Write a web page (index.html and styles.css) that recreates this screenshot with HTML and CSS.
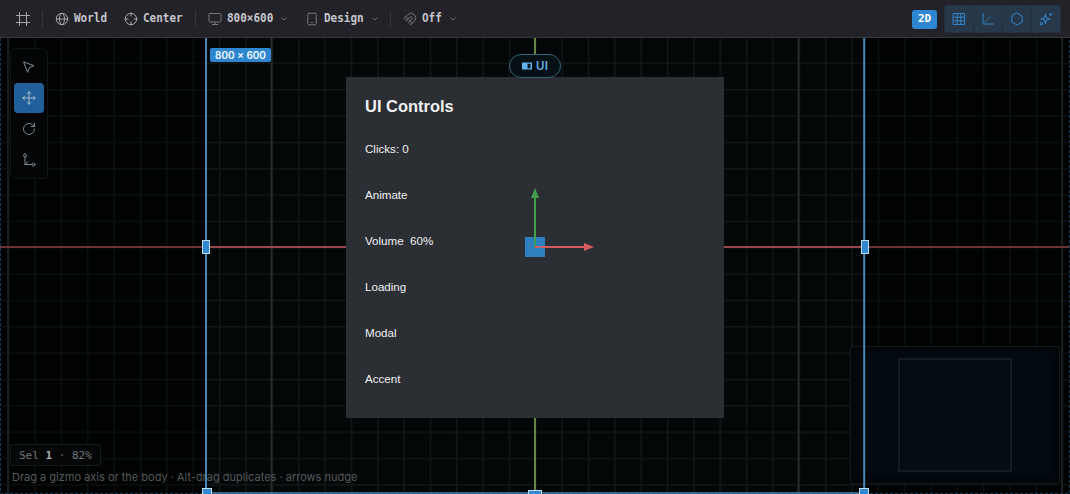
FILE: index.html
```html
<!DOCTYPE html>
<html lang="en">
<head>
<meta charset="utf-8">
<title>Scene editor</title>
<link rel="stylesheet" href="styles.css">
</head>
<body>
<div class="editor">
  <header class="toolbar">
    <svg class="icon frame-icon" viewBox="0 0 16 16"><path d="M4.5 1.5v13M11.5 1.5v13M1.5 4.5h13M1.5 11.5h13"/></svg>
    <i class="divider first"></i>
    <div class="item world"><svg class="icon" viewBox="0 0 14 14"><circle cx="7" cy="7" r="5.7"/><ellipse cx="7" cy="7" rx="2.5" ry="5.7"/><path d="M1.3 7h11.4"/></svg><span>World</span></div>
    <div class="item center"><svg class="icon" viewBox="0 0 14 14"><circle cx="7" cy="7" r="5.7"/><path d="M7 1v3M7 10v3M1 7h3M10 7h3"/></svg><span>Center</span></div>
    <i class="divider second"></i>
    <div class="item size"><svg class="icon dim" viewBox="0 0 14 14"><rect x="1" y="1.5" width="12" height="8.5" rx="1.2"/><path d="M7 10v2.5M4.3 12.5h5.4"/></svg><span>800×600</span><svg class="chevron" viewBox="0 0 8 8"><path d="M1.5 2.5 4 5l2.500-2.500"/></svg></div>
    <div class="item design"><svg class="icon dim" viewBox="0 0 14 14"><rect x="2.800" y="1.200" width="8.400" height="11.600" rx="1.200"/><path d="M6.500 10.500h1"/></svg><span>Design</span><svg class="chevron" viewBox="0 0 8 8"><path d="M1.500 2.500 4 5l2.500-2.500"/></svg></div>
    <i class="divider third"></i>
    <div class="item snap"><svg class="icon dim" viewBox="0 0 24 24"><path d="m6 15-4-4 6.750-6.770a7.790 7.790 0 0 1 11 11L13 22l-4-4 6.390-6.360a2.140 2.140 0 0 0-3-3L6 15M5 8l4 4M12 15l4 4"/></svg><span>Off</span><svg class="chevron" viewBox="0 0 8 8"><path d="M1.500 2.500 4 5l2.500-2.500"/></svg></div>
    <div class="mode">2D</div>
    <div class="toggles">
      <div class="toggle"><svg class="icon" viewBox="0 0 14 14"><path d="M1.500 1.500h11v11h-11zM5.200 1.500v11M8.800 1.500v11M1.500 5.200h11M1.500 8.800h11"/></svg></div>
      <div class="toggle"><svg class="icon" viewBox="0 0 14 14"><path d="M2 1.500V12h10.500M4 10l1-1M6 8l1-1M8 6l1-1"/></svg></div>
      <div class="toggle"><svg class="icon" viewBox="0 0 14 14"><path d="m7 1 5.200 3v6L7 13l-5.200-3V4z"/></svg></div>
      <div class="toggle"><svg class="icon" viewBox="0 0 24 24"><path class="spark" d="M11 4c1 6 2 7 8 8-6 1-7 2-8 8-1-6-2-7-8-8 6-1 7-2 8-8zM20 2v4M22 4h-4"/><circle class="spark" cx="4" cy="20" r="2"/></svg></div>
    </div>
  </header>

  <main class="stage">
    <svg class="canvas" viewBox="0 38 1070 456">
      <defs>
        <pattern id="cells" patternUnits="userSpaceOnUse" x="535" y="247" width="26.350" height="26.350"><path class="cell-line" d="M0 0H26.350M0 0V26.350"/></pattern>
      </defs>
      <rect class="world-space" x="206" y="38" width="658" height="456"/>
      <rect x="0" y="38" width="1070" height="456" fill="url(#cells)"/>
      <path class="major" d="M8 38v456M271.500 38v456M798.500 38v456M1062 38v456"/>
      <path class="axis-x" d="M0 247h1070"/>
      <path class="axis-y" d="M535 38v456"/>
      <path class="outside" d="M0 38h205v456H0zM865 38h205v456H865z"/>
      <path class="bounds" d="M.5 38v455.500h1069V38"/>
    </svg>

    <section class="scene-panel">
      <h1>UI Controls</h1>
      <p>Clicks: 0</p>
      <p>Animate</p>
      <p>Volume&nbsp; 60%</p>
      <p>Loading</p>
      <p>Modal</p>
      <p>Accent</p>
    </section>

    <div class="node-tag"><svg viewBox="0 0 10 8"><path d="M0 .5h10v7H0z" fill="#62b5e9"/><path d="M5.500 1.700h3v4.600h-3z" fill="#071820"/></svg><span>UI</span></div>

    <nav class="tools">
      <div class="tool"><svg class="icon" viewBox="0 0 14 14"><path d="m2 2 10 3.700-4.500 1.800L5.700 12z"/></svg></div>
      <div class="tool active"><svg class="icon" viewBox="0 0 14 14"><path d="M7 .8v12.400M.8 7h12.400M5.200 2.600 7 .8l1.800 1.800M5.200 11.400 7 13.200l1.800-1.800M2.600 5.200.8 7l1.800 1.800M11.400 5.200 13.200 7l-1.800 1.800"/></svg></div>
      <div class="tool"><svg class="icon" viewBox="0 0 14 14"><path d="M12.500 7A5.500 5.500 0 1 1 10.800 3l1.700 1.600M12.500 1.300v3.300H9.200"/></svg></div>
      <div class="tool"><svg class="icon" viewBox="0 0 14 14"><circle cx="3" cy="2.500" r="1.500"/><circle cx="11.500" cy="11.500" r="1.500"/><path d="M3 4v7.500h7M3 11.500l3-3"/></svg></div>
    </nav>

    <div class="status">Sel <b>1</b> · 82%</div>
    <div class="hint">Drag a gizmo axis or the body · Alt-drag duplicates · arrows nudge</div>
    <div class="minimap"><div class="viewport"></div></div>

    <svg class="canvas overlay" viewBox="0 38 1070 456">
      <path class="frame-side" d="M206 38v455M864.200 38v455"/>
      <path class="frame-bottom" d="M206 493h658"/>
      <rect class="handle" x="202.500" y="240.500" width="7" height="13"/>
      <rect class="handle" x="861.500" y="240.500" width="7" height="13"/>
      <rect class="handle" x="202.500" y="488.500" width="9" height="9"/>
      <rect class="handle" x="528.500" y="490.500" width="13" height="8"/>
      <rect class="handle" x="859.500" y="488.500" width="9" height="9"/>
      <rect class="gizmo-body" x="525" y="237" width="20" height="20"/>
      <path class="gizmo-y" d="M535 247v-51"/><path class="tip-y" d="m531 198 4-10 4 10z"/>
      <path class="gizmo-x" d="M535 247h50"/><path class="tip-x" d="m584 243 10 4-10 4z"/>
      <rect class="gizmo-inner" x="528.500" y="243.500" width="12" height="8"/>
    </svg>
    <div class="size-tag">800 × 600</div>
  </main>
</div>
</body>
</html>
```
FILE: styles.css
```css
* { box-sizing: border-box; }
body { margin: 0; background: #020304; font-family: Inter, "Liberation Sans", sans-serif; overflow: hidden; }
svg { display: block; }
.editor { display: flex; flex-direction: column; width: 1070px; height: 494px; }

.toolbar { display: flex; align-items: center; flex: none; height: 38px; padding: 1px 9px 0 15px; background: #232228; border-bottom: 1px solid #35363a; color: #c5c5cb; font: bold 11px/14px "DejaVu Sans Mono", monospace; }
.icon { width: 14px; height: 14px; fill: none; stroke: #a6a6ad; stroke-width: 1; stroke-linecap: round; stroke-linejoin: round; flex: none; }
.icon.dim { stroke: #77777e; }
.frame-icon { width: 16px; height: 16px; }
.divider { width: 1px; height: 16px; background: #36363b; }
.first { margin: 0 12px 0 11px; }
.second { margin: 0 12px; }
.third { margin: 0 12px 0 11px; }
.item { display: flex; align-items: center; gap: 5px; white-space: nowrap; }
.item span { transform: scaleY(1.1); }
.world { width: 69px; }
.center { width: 59px; }
.size { width: 97px; }
.size .chevron, .design .chevron, .snap .chevron { margin-left: 2px; }
.design { width: 74px; }
.snap { width: 60px; }
.snap .icon { stroke-width: 1.7; }
.chevron { width: 8px; height: 8px; fill: none; stroke: #6c6c73; stroke-width: 1; }
.mode { display: grid; place-items: center; width: 25px; height: 19px; margin-left: auto; margin-right: 7px; border-radius: 3px; background: #2f86d0; color: #fff; font-size: 11px; }
.toggles { display: flex; gap: 1px; width: 117px; height: 28px; padding: 1px; border-radius: 4px; background: #233142; }
.toggle { display: grid; place-items: center; flex: 1; background: #27384b; border-radius: 2px; }
.toggle .icon { stroke: #3484c8; }
.spark { stroke-width: 1.800; }

.stage { position: relative; flex: 1; background: #020304; overflow: hidden; }
.canvas { position: absolute; inset: 0; width: 1070px; height: 456px; }
.world-space { fill: #030708; }
.cell-line { stroke: #121718; stroke-width: 3; }
.major { stroke: #252a2b; stroke-width: 2; }
.axis-x { stroke: #98494f; stroke-width: 2; }
.axis-y { stroke: #658446; stroke-width: 2; }
.outside { fill: #000; opacity: .3; }
.bounds { fill: none; stroke: #173852; stroke-dasharray: 3 2; }
.frame-side { fill: none; stroke: #4c86b5; stroke-width: 2; }
.frame-bottom { stroke: #4582b0; stroke-width: 1.500; }
.handle { fill: #3188d1; stroke: #c2deef; stroke-width: 1; }
.gizmo-body { fill: #2d80bf; }
.gizmo-inner { fill: none; stroke: #3b83bb; }
.gizmo-y { stroke: #449f4b; stroke-width: 2; }
.tip-y { fill: #449f4b; }
.gizmo-x { stroke: #d65b5d; stroke-width: 2; }
.tip-x { fill: #d65b5d; }

.scene-panel { position: absolute; left: 346px; top: 38.500px; width: 378px; height: 341px; padding: 17px 19px; background: #2b2e32; color: #f0f1f2; font-family: "Liberation Sans", Arial, sans-serif; }
.scene-panel h1 { margin: 0 0 21px; font-size: 16.470px; line-height: 24px; }
.scene-panel p { margin: 0 0 26px; font-size: 11.600px; line-height: 20px; }

.node-tag { position: absolute; left: 509px; top: 16px; display: flex; align-items: center; justify-content: center; gap: 4px; width: 52px; height: 24px; border: 1px solid #34637a; border-radius: 12px; background: #071014; color: #62b5e9; font-weight: 600; font-size: 11.500px; letter-spacing: .3px; }
.node-tag svg { width: 10px; height: 8px; }
.size-tag { position: absolute; left: 210px; top: 10px; width: 61px; height: 14px; border-radius: 2px; background: #2f86d0; color: #f6faff; font-size: 10px; line-height: 15px; font-weight: 600; text-align: center; }

.tools { position: absolute; left: 10px; top: 10px; display: flex; flex-direction: column; gap: 1px; width: 38px; height: 131px; padding: 3px; border: 1px solid #111415; border-radius: 5px; background: #030506; }
.tool { display: grid; place-items: center; width: 30px; height: 30px; border-radius: 4px; }
.tool .icon { stroke: #85898c; }
.tool.active { background: #205f99; }
.tool.active .icon { stroke: #a3bdd1; }

.status { position: absolute; left: 10px; top: 406px; width: 91px; height: 22px; padding-left: 8px; border: 1px solid #171a1b; border-radius: 2px; background: #050708; color: #75787a; font: 11px/21px "DejaVu Sans Mono", monospace; white-space: nowrap; }
.status b { color: #abadaf; }
.hint { position: absolute; left: 12px; top: 432px; color: #55595b; font-size: 11px; line-height: 15px; white-space: nowrap; }
.minimap { position: absolute; left: 850px; top: 308px; display: grid; place-items: center; width: 210px; height: 138px; padding-bottom: 1px; border: 1px solid #171a1c; border-radius: 3px; background: #040a12; box-shadow: inset 0 0 6px 3px #030607; }
.viewport { width: 114px; height: 114px; border: 2px solid #151b22; background: #050c13; }
```
